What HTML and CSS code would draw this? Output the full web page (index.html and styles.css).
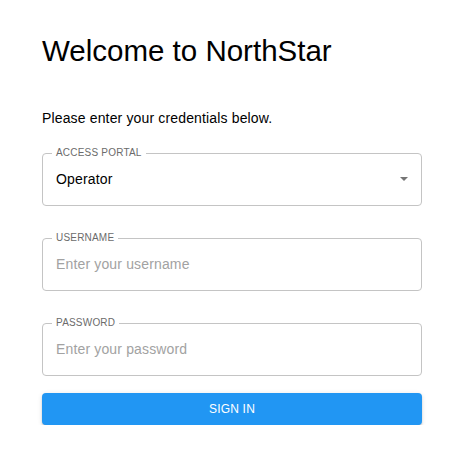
FILE: index.html
```html
<!DOCTYPE html>
<html lang="en">
<head>
<meta charset="utf-8">
<title>NorthStar</title>
<link rel="stylesheet" href="styles.css">
</head>
<body>
<main class="login">
  <h1 class="title">Welcome to NorthStar</h1>
  <p class="subtitle">Please enter your credentials below.</p>
  <form class="form">
    <fieldset class="field">
      <legend class="field-label">ACCESS PORTAL</legend>
      <div class="field-control select">
        <span class="value">Operator</span>
        <svg class="arrow" width="8" height="4" viewBox="0 0 8 4"><path d="M0 0h8L4 4z" fill="#757575"/></svg>
      </div>
    </fieldset>
    <fieldset class="field">
      <legend class="field-label">USERNAME</legend>
      <div class="field-control">
        <input class="input" type="text" placeholder="Enter your username">
      </div>
    </fieldset>
    <fieldset class="field">
      <legend class="field-label">PASSWORD</legend>
      <div class="field-control">
        <input class="input" type="password" placeholder="Enter your password">
      </div>
    </fieldset>
    <button class="submit" type="button">SIGN IN</button>
  </form>
</main>
</body>
</html>
```
FILE: styles.css
```css
html, body {
  margin: 0;
  padding: 0;
  background: #fff;
}
body {
  font-family: "Liberation Sans", Arial, sans-serif;
  color: #000;
}
.login {
  width: 380px;
  padding: 33px 0 0 42px;
}
.title {
  margin: 0;
  font-size: 29.5px;
  line-height: 36px;
  font-weight: 400;
}
.subtitle {
  margin: 39px 0 0;
  font-size: 14px;
  line-height: 20px;
  letter-spacing: 0.15px;
}
.form {
  display: flex;
  flex-direction: column;
  margin-top: 19px;
}
.field {
  margin: 0 0 26px;
  padding: 0 14px 0 13px;
  border: 1px solid #c4c4c4;
  border-radius: 4px;
  height: 59px;
  box-sizing: border-box;
}
.field:last-of-type {
  margin-bottom: 17px;
}
.field-label {
  margin-left: -4px;
  padding: 0 4px;
  font-size: 10px;
  line-height: 12px;
  letter-spacing: 0.2px;
  color: #6b6b6b;
}
.field-control {
  display: flex;
  align-items: center;
  height: 20px;
  padding-top: 10px;
}
.value {
  font-size: 14px;
  line-height: 20px;
  letter-spacing: 0.15px;
  color: #000;
  flex: 1;
}
.arrow {
  display: block;
  margin-right: -1px;
}
.input {
  flex: 1;
  border: 0;
  outline: 0;
  padding: 0;
  margin: 0;
  font-family: "Liberation Sans", Arial, sans-serif;
  font-size: 14px;
  line-height: 20px;
  height: 20px;
  letter-spacing: 0.15px;
  background: transparent;
  color: #000;
}
.input::placeholder {
  color: #a2a2a2;
  opacity: 1;
}
.submit {
  height: 32px;
  border: 0;
  border-radius: 4px;
  background: #2196f3;
  color: #fff;
  font-family: "Liberation Sans", Arial, sans-serif;
  font-size: 12px;
  letter-spacing: 0.2px;
  box-shadow: 0 3px 1px -2px rgba(0,0,0,.2), 0 2px 2px 0 rgba(0,0,0,.14), 0 1px 5px 0 rgba(0,0,0,.12);
  padding: 0;
}
```
